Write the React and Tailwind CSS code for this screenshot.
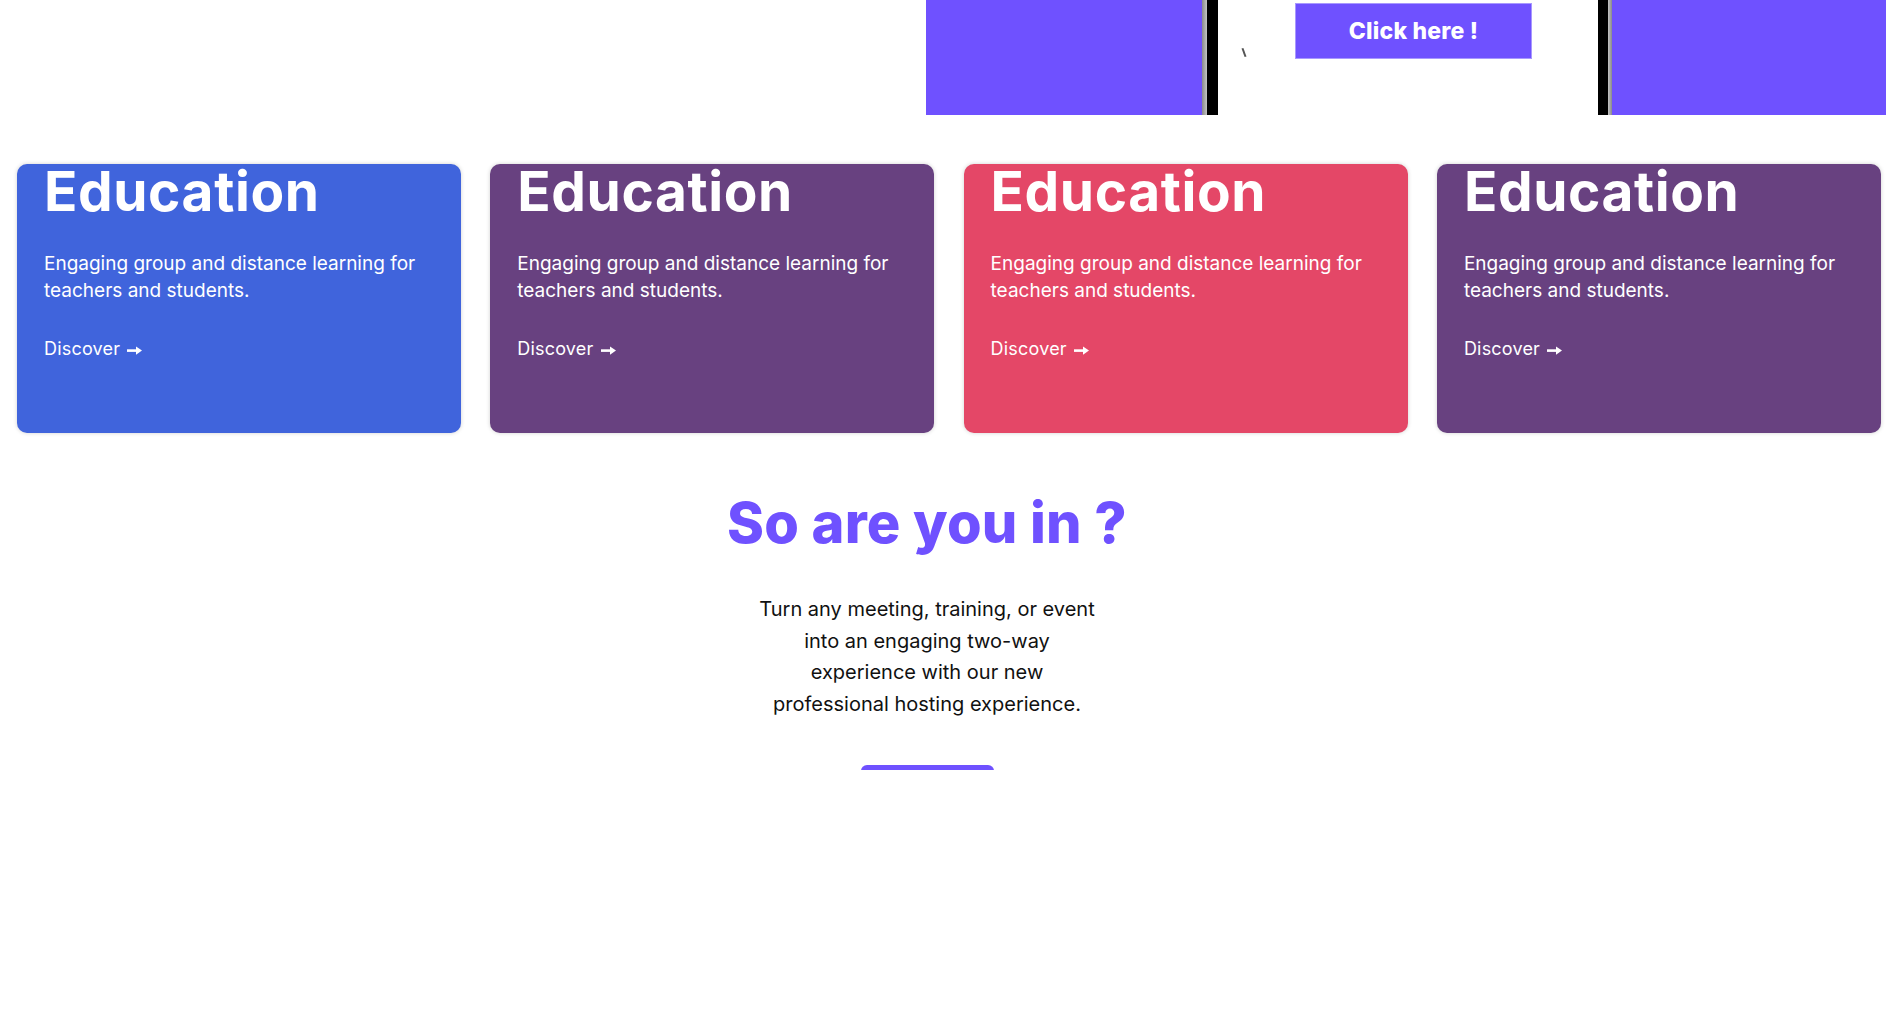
import React from "react";

const cards = [
  { bg: "bg-[#4064dc]" },
  { bg: "bg-[#684180]" },
  { bg: "bg-[#e44767]" },
  { bg: "bg-[#684180]" },
];

function Arrow() {
  return (
    <svg width="15" height="9" viewBox="0 0 15 9" className="ml-[7px] mt-[2px]">
      <rect x="0" y="3.3" width="10" height="2.6" fill="white" />
      <polygon points="9,0.4 15,4.6 9,8.8" fill="white" />
    </svg>
  );
}

function Card({ bg }) {
  return (
    <div
      className={`${bg} w-[444px] h-[269px] shrink-0 rounded-[10px] shadow-[0_0_4px_rgba(0,0,0,0.18)] pl-[27px] text-white`}
    >
      <h2 className="font-['Inter',sans-serif] font-bold text-[55px] leading-none tracking-[0.6px] m-0">
        Education
      </h2>
      <p className="mt-[32px] font-['Inter',sans-serif] text-[19px] leading-[26.5px] w-[410px] whitespace-nowrap">
        Engaging group and distance learning for
        <br />
        teachers and students.
      </p>
      <div className="mt-[32px] flex items-center font-['Inter',sans-serif] text-[18px] tracking-[0.2px] leading-[26px]">
        <span>Discover</span>
        <Arrow />
      </div>
    </div>
  );
}

export default function App() {
  return (
    <div className="w-[1886px] min-h-[1018px] bg-white overflow-hidden">
      {/* top band */}
      <div className="flex h-[115px]">
        <div className="w-[926px] shrink-0 bg-white" />
        <div className="w-[276px] shrink-0 bg-[#6f51ff]" />
        <div className="w-[5px] shrink-0 bg-gradient-to-r from-[#8a8a8a] to-[#c4c4c4]" />
        <div className="w-[11px] shrink-0 bg-black" />
        <div className="relative w-[380px] shrink-0 bg-white pl-[77px] pt-[3px]">
          <div className="absolute left-[25px] top-[48px] w-[2px] h-[9px] bg-[#555] -rotate-[20deg]" />
          <button className="w-[237px] h-[56px] bg-[#6f51ff] border border-[#a898ff] text-white font-['Inter',sans-serif] font-extrabold text-[23px] tracking-[0.2px] flex items-center justify-center">
            Click here !
          </button>
        </div>
        <div className="w-[10px] shrink-0 bg-black" />
        <div className="w-[4px] shrink-0 bg-gradient-to-r from-[#c4c4c4] to-[#8a8a8a]" />
        <div className="flex-1 bg-[#6f51ff]" />
      </div>

      {/* cards */}
      <div className="mt-[49px] flex gap-[29.3px] pl-[17px]">
        {cards.map((c, i) => (
          <Card key={i} bg={c.bg} />
        ))}
      </div>

      {/* CTA */}
      <div className="w-[1854px] flex flex-col items-center">
        <h1 className="mt-[62px] font-['Inter',sans-serif] font-extrabold text-[56px] leading-none text-[#6f51ff] tracking-[0.2px]">
          So are you in ?
        </h1>
        <p className="mt-[43px] font-['Inter',sans-serif] text-[20px] leading-[31.5px] text-[#111] text-center">
          <span className="block whitespace-nowrap">Turn any meeting, training, or event</span>
          <span className="block whitespace-nowrap">into an engaging two-way</span>
          <span className="block whitespace-nowrap">experience with our new</span>
          <span className="block whitespace-nowrap">professional hosting experience.</span>
        </p>
        <div className="mt-[45px] h-[5px] overflow-hidden">
          <div className="w-[133px] h-[48px] rounded-[6px] bg-[#6f51ff]" />
        </div>
      </div>
    </div>
  );
}
